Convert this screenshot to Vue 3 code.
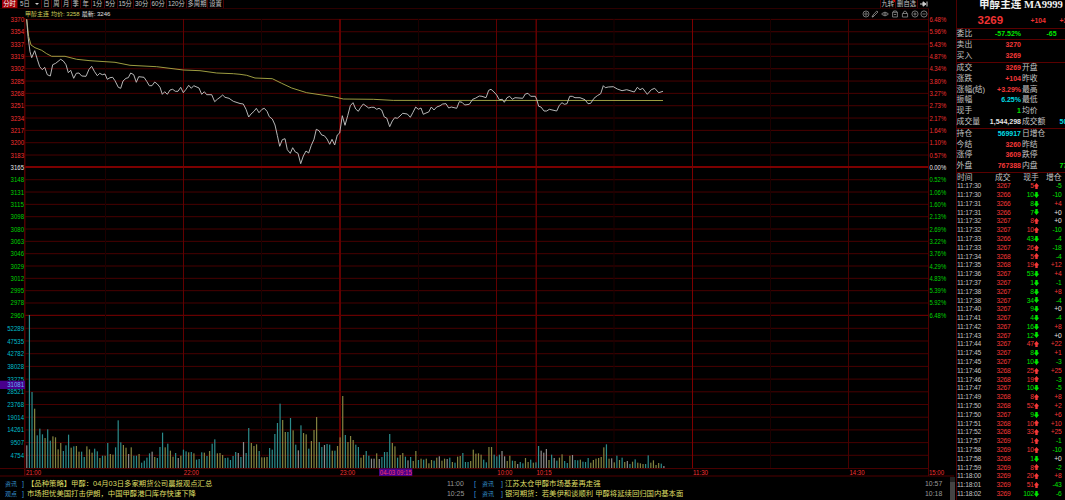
<template>
  <div class="terminal">
    <div class="main">
      <div class="toolbar">
        <span
          v-for="p in periods"
          :key="p.name"
          class="period"
          :class="{ active: p.name === current }"
          :style="{ width: p.w + 'px' }"
          @click="current = p.name"
        >{{ p.name }}<i v-if="p.drop" class="caret"></i></span>
        <span class="tool nine">九转</span>
        <span class="tool">删自选</span>
        <span class="tool">
          <svg class="collapse" viewBox="0 0 8 6"><path d="M0 3H4M3 0.8L6 3L3 5.2ZM7 0.5V5.5" /></svg>
        </span>
      </div>

      <div class="legend">
        <span class="avg">甲醇主连</span>
        <span class="avg">均价: 3258</span>
        <span>最新: 3246</span>
        <div class="icons">
          <svg viewBox="0 0 8 8"><circle cx="4" cy="4" r="3" /><circle cx="4" cy="4" r="1.2" /></svg>
          <svg viewBox="0 0 8 8"><path d="M1 7L2 5L5.8 1L7 2L3 6ZM1 7L3 6" /></svg>
          <svg viewBox="0 0 8 8"><path d="M0.6 4Q4 0.4 7.4 4Q4 7.6 0.6 4Z" /><circle cx="4" cy="4" r="1.2" /></svg>
          <svg viewBox="0 0 8 8"><path d="M1 2.3H7M2.6 2V1H5.4V2M1.6 2.5V7H6.4V2.5M2.8 4.5H5.2" /></svg>
          <svg viewBox="0 0 8 8"><path d="M1.4 3.5H6.6V7H1.4ZM2.4 3.5V2Q4 0 5.6 2V3.5" /></svg>
          <svg viewBox="0 0 8 8"><circle cx="4" cy="4" r="3.1" /><path d="M2.4 4H5.6M4 2.4V5.6" /></svg>
          <svg viewBox="0 0 8 8"><circle cx="4" cy="4" r="3.1" /><path d="M2.4 4H5.6" /></svg>
        </div>
      </div>

      <svg class="chart" viewBox="0 18 954 458">
        <!-- grid -->
        <rect v-for="(p, i) in prices" :key="'p' + p" x="25" :y="priceY(i) - 0.5" width="904" height="1" :class="i === 24 ? 'strong' : 'grid'" />
        <rect v-for="(v, i) in volumes" :key="'v' + v" x="25" :y="volumeY(i) - 0.5" width="904" height="1" class="grid" />
        <rect v-for="l in columns" :key="l.x" :x="l.x" y="19" :width="l.w" height="449" :class="l.kind" />
        <rect x="25" y="166" width="904" height="2" class="strong" />
        <rect x="24" y="18" width="1.5" height="458" class="frame" />
        <rect x="928" y="9" width="1" height="467" class="frame" />
        <rect x="0" y="468" width="929" height="1" class="grid" />
        <rect x="0" y="475.5" width="954" height="1" class="frame" />

        <!-- volume -->
        <rect v-for="(b, i) in bars" :key="'b' + i" :x="26.2 + i * 2.611" :y="468 - b.h" width="1.2" :height="b.h" :class="b.kind" />

        <!-- price -->
        <polyline class="line-avg" :points="avgLine" />
        <polyline class="line-last" :points="lastLine" />

        <!-- axes -->
        <text v-for="(p, i) in prices" :key="'tp' + p" x="10.6" :y="priceY(i) + 2.5" textLength="13.4" lengthAdjust="spacingAndGlyphs" :class="side(i)">{{ p }}</text>
        <text v-for="(p, i) in percents" :key="'tc' + i" x="929.4" :y="priceY(i) + 2.5" textLength="16.8" lengthAdjust="spacingAndGlyphs" :class="side(i)">{{ p }}%</text>
        <text
          v-for="(v, i) in volumes"
          :key="'tv' + v"
          :x="v > 9999 ? 7.2 : 10.6"
          :y="volumeY(i) + 2.5"
          :textLength="v > 9999 ? 16.8 : 13.4"
          lengthAdjust="spacingAndGlyphs"
          class="cyan"
        >{{ v }}</text>
        <text v-for="t in times" :key="t.x" :x="t.x" y="474.8" textLength="15" lengthAdjust="spacingAndGlyphs" class="up">{{ t.label }}</text>

        <!-- cursor labels -->
        <rect x="0" y="380.7" width="25" height="8.3" class="cursor" />
        <text x="7.2" y="387.3" textLength="16.8" lengthAdjust="spacingAndGlyphs" class="cursor-vol">31081</text>
        <rect x="379" y="468.5" width="33.3" height="7.5" class="cursor" />
        <text x="379.8" y="474.8" textLength="32" lengthAdjust="spacingAndGlyphs" class="cursor-time">04-03 09:15</text>
      </svg>

      <div class="news">
        <div v-for="n in news" :key="n.title" class="news-row">
          <span class="tag">{{ n.tag }}</span>
          <span class="bracket">]</span>
          <span class="title">{{ n.title }}</span>
          <span class="time">{{ n.time }}</span>
          <span class="bracket">[</span>
          <span class="tag">资讯</span>
          <span class="bracket">]</span>
          <span class="title">{{ n.title2 }}</span>
          <span class="time">{{ n.time2 }}</span>
        </div>
        <div class="scrollbar"><i></i></div>
      </div>
    </div>

    <div class="quote">
      <div class="name">甲醇主连 MA9999</div>
      <div class="last"><b>3269</b><span>+104</span><span>+3.29%</span></div>
      <div v-for="(group, g) in quote" :key="g" class="group">
        <div v-for="r in group" :key="r[0]" class="row">
          <span>{{ r[0] }}</span>
          <b :class="r[2]">{{ r[1] }}</b>
          <span>{{ r[3] }}</span>
          <b :class="r[5]">{{ r[4] }}</b>
        </div>
      </div>
      <div class="tick head"><span>时间</span><span>成交</span><span>现手</span><span>增仓</span></div>
      <div v-for="(t, i) in ticks" :key="i" class="tick">
        <span>{{ t.time }}</span>
        <span class="up">{{ t.price }}</span>
        <span class="lots" :class="t.dir">{{ t.lots }}<svg class="arrow" viewBox="0 0 5 6"><path :d="t.dir === 'up' ? upArrow : downArrow" /></svg></span>
        <span :class="changeClass(t.change)">{{ t.change }}</span>
      </div>
    </div>
  </div>
</template>

<script setup>
import { ref } from 'vue';

const current = ref('分时');

const periods = [
  { name: '分时', w: 16 },
  { name: '5日', w: 24, drop: true },
  { name: '日', w: 10 },
  { name: '周', w: 10 },
  { name: '月', w: 9.5 },
  { name: '季', w: 9.5 },
  { name: '年', w: 10.5 },
  { name: '1分', w: 13 },
  { name: '5分', w: 13 },
  { name: '15分', w: 16.5 },
  { name: '30分', w: 16.5 },
  { name: '60分', w: 16.5 },
  { name: '120分', w: 20 },
  { name: '多周期', w: 21 },
  { name: '设置', w: 16 }
];

const prices = [
  3370, 3354, 3337, 3319, 3302, 3285, 3268, 3251, 3234, 3217, 3200, 3183, 3165,
  3148, 3131, 3115, 3098, 3080, 3063, 3046, 3029, 3012, 2995, 2978, 2960
];
const percents = [
  '6.48', '5.96', '5.43', '4.87', '4.34', '3.80', '3.27', '2.73', '2.17', '1.64', '1.10', '0.57', '0.00',
  '0.52', '1.06', '1.60', '2.13', '2.69', '3.22', '3.76', '4.29', '4.83', '5.39', '5.92', '6.48'
];
const volumes = [52289, 47535, 42782, 38028, 33275, 28521, 23768, 19014, 14261, 9507, 4754];

const priceY = (i) => 19.4 + i * 12.33;
const volumeY = (i) => 328.3 + i * 12.7;
const side = (i) => (i < 12 ? 'up' : i === 12 ? 'flat' : 'down');

const columns = [
  { x: 105, w: 1, kind: 'faint' },
  { x: 183, w: 1, kind: 'mid' },
  { x: 261, w: 1, kind: 'faint' },
  { x: 339, w: 2, kind: 'mid' },
  { x: 418, w: 1, kind: 'faint' },
  { x: 496, w: 1, kind: 'mid' },
  { x: 535.5, w: 1.5, kind: 'mid' },
  { x: 613.5, w: 1, kind: 'faint' },
  { x: 692, w: 1, kind: 'strong' },
  { x: 770, w: 1, kind: 'faint' },
  { x: 848, w: 1, kind: 'grid' }
];

const times = [
  { x: 26, label: '21:00' },
  { x: 183.8, label: '22:00' },
  { x: 340, label: '23:00' },
  { x: 497.3, label: '10:00' },
  { x: 536.5, label: '10:15' },
  { x: 693, label: '11:30' },
  { x: 849.5, label: '14:30' },
  { x: 929, label: '15:00' }
];

// c = falling, y = rising, w = unchanged; three units to a pixel
const bars = `
w68 c459 c228 y178 c98 c118 c101 y90 c116 c82 y95 y92 y56 y75 c51 c68 c100 y61 c65 y66 y49 c49 c33 y65 y56 y46 c58 c50 y30 c37
y37 c75 y42 y40 c62 c143 c77 y69 y61 w42 y62 c37 c37 y42 c16 c22 c31 c44 w49 y33 c30 c63 c106 y62 c73 y52 y34 c45 w30 y37
c55 c50 y47 c48 y44 c25 c27 c47 y46 c36 y51 c73 c86 y44 y45 y39 c30 c31 c24 c36 c48 w45
c33 w78 c45 c120 y75 y66 y71 c51 y32 y32 y33 c60 c55 c102 c135 c193 y144 y108 c108 c150 y113 c70 w53 c128 y105 y101 c58 y81 y114 y153
c78 c63 w69 c72 c70 y52 c52 y66 y92 y216 c99 y78 y96 y84 c70 c63 y31 y39 c51 c37 w28 w28 y44 w27 c33 c48 c48 c102 y75 y65
c31 y39 y45 c34 w23 c33 y21 y51 c24 y28 c25 y28 y14 y24 c22 y31 w35 y22 y28 w27 c31 y18 c16 y34 y36 c45 c18 c18 y21 y55 y43 y44
y40 c25 c17 y63 y63 c40 c35 c40 w51 w35 y21 y37 c22 y21 w12 c18 c14 y30 y18 c25 y16 c17 c66 w52 w46 w57 y24 c40 w30 c22
y31 y41 c21 c15 y37 w39 c24 c23 y25 c19 c18 c30 y16 y24 y28 y30 y33 y62 c71 y28 w29 y17 c37 y24 c31 y18 w21 c12 y19 c26
y16 y14 y12 c12 c38 y16 y23 y9 y15 c13 w6
`.trim().split(/\s+/).map((b) => ({ kind: 'bar-' + b[0], h: b.slice(1) / 3 }));

const lastLine = `
26.7,19.3 28,36.7 30,51.7 31.7,57.7 34.7,50.7 37.3,59.3 39.7,66.7 42.3,69.7 44.7,67.3 47.3,74.7 50.3,76 52.7,64.7 55.7,63.3
60.7,59.3 63.3,61 66,64.7 68.3,72.7 70.7,70.3 73.7,78.3 76.3,73.3 79,73 81.7,76 86,76.3 89,69.3 91.7,66.3 94.3,71.3 97.3,75.7
99.7,73.3 102.3,74.7 105,74 107.3,79.3 110,77.7 112.7,77.3 115,80.7 118.3,87.3 120.7,88.3 123,81 126,78.3 128.3,77.7 130.7,73
133.7,74.7 136.3,82.3 138.7,76.7 144,77.3 146.7,81.3 149.3,85.7 152,85.7 154.7,82 157.3,84 160,87.3 162.3,94.3 164.7,91.7
167.3,94.3 170,90 172.7,89.3 175.3,91.3 178,91.3 180.7,87.3 183.3,92.7 186,89.3 188.7,85.3 191.3,88.3 193.7,85.7 199,88
201.7,94.3 204.3,91.7 206.7,94.7 211.7,94.7 214.7,101.7 217.3,99.3 220,97.3 222.7,95 225,97.3 229,98.3 233.3,101.3 240,103.5
243.3,104 246,109.3 248.7,117 251,114 254,111.3 256.3,108.3 259,112.7 262,109.3 264.3,108.3 267,111.3 269.3,116.7 272.3,119
275,125 277.3,135.3 279.7,146.3 282.3,139.7 285,138.7 287.3,149.7 290.3,153.3 292.7,147.7 295.3,152 298,153.3 300.7,163.7
303.3,156 306,151 308.7,153 311.3,145.3 314,139.3 316.3,129.3 319,130.7 321.7,135 324.3,135.7 327,139 329.7,144.3 332,139.3
334.7,145 337.3,135 339.7,133 342.3,115.7 345,125.3 347.7,115.7 350.3,105.7 353,102.7 355.7,109 358.3,111.3 360.7,107.3
363.3,104 366,106 368.7,108 371.3,107.3 374,107.3 376.7,109.3 379,108.3 381.7,110 384.3,117 386.7,118 389.7,126.7 392.3,121
394.7,117.7 397.3,118.3 400,116 402.7,113.3 407.3,114 410.3,117.3 413,112.3 415.7,107 418.3,109.3 421,108 423.3,114.3 426,113
428.7,112 431.3,107 434,110 436.7,107 440,105.8 442.7,104 446,103.7 448.7,108 451.3,107 456.7,108.3 459.3,101.7 462,102.3
464.7,105 469.3,104.3 472.7,99.3 475.3,98.3 479.3,96 482,96.3 486,97.7 488.7,90.3 491,89.3 494,92 496.7,95 499.3,99.7
502.3,99.3 504.3,102.3 507,97.7 509.7,96.3 512.3,99.3 515,97.7 522.7,98.3 525.3,94 528,93.3 530.7,96.3 535.3,96.3 536.7,99.3
538.7,106.3 541,107 544,111 546.7,111 549.3,109.3 556.7,111 559.3,105.3 562,102.7 564.3,104.3 567,103.7 569.7,96.3 572.3,96.3
575,97.7 580,97.7 585,99.7 588,103.7 590.7,103.3 594,98.3 597.3,95.7 600.7,93.7 603.3,85.7 605.3,87.7 608.3,87 613.3,86.7
617.3,89 622,90.7 626.7,89.7 634.3,92 637.3,87.3 640,89.7 642.7,88.3 647.3,94.3 651.3,89.7 654.7,88.3 658.7,92.7 663,91.3
`.trim();

const avgLine = `
26.7,19.3 28.7,36.7 31,45 35,47.7 41.7,50.3 46.7,53.7 51.7,56.3 65,56.3 76.7,59.3 90,60.7 115,62.3 130,65.3 156.7,66.7
183.3,70 200,70.7 216.7,73 233.3,73.7 240,74.3 246.7,75.3 255,78 272.3,78.7 281.7,83.3 291.7,88 306.7,92.7 320,94.7
333.3,96.7 343.3,99 373.3,99.3 393.3,100.4 663,100.5
`.trim();

const news = [
  { tag: '资讯', title: '【品种策略】甲醇：04月03日多家期货公司晨报观点汇总', time: '11:00', title2: '江苏太仓甲醇市场基差再走强', time2: '10:57' },
  { tag: '观点', title: '市场担忧美国打击伊朗，中国甲醇港口库存快速下降', time: '10:25', title2: '银河期货：若美伊和谈顺利 甲醇将延续回归国内基本面', time2: '10:18' }
];

const quote = [
  [['委比', '-57.52%', 'down', '', '-65', 'down near']],
  [['卖出', '3270', 'up'], ['买入', '3269', 'up']],
  [
    ['成交', '3269', 'up', '开盘'],
    ['涨跌', '+104', 'up', '昨收'],
    ['涨幅(结)', '+3.29%', 'up', '最高'],
    ['振幅', '6.25%', 'cyan', '最低'],
    ['现手', '1', 'down', '均价'],
    ['成交量', '1,544,298', 'flat', '成交额', '50', 'cyan']
  ],
  [
    ['持仓', '569917', 'cyan', '日增仓'],
    ['今结', '3260', 'up', '昨结'],
    ['涨停', '3609', 'up', '跌停'],
    ['外盘', '767388', 'up', '内盘', '77', 'down']
  ]
];

const upArrow = 'M2.5 0L5 3L3.7 3.8V6H1.3V3.8L0 3Z';
const downArrow = 'M2.5 6L5 3L3.7 2.2V0H1.3V2.2L0 3Z';

const ticks = `
30 3267 5u -5|30 3266 10d -10|31 3266 8d +4|31 3266 7d +0|32 3267 8u +0|32 3267 10u -10|33 3266 43d -4|33 3267 26u -18
34 3268 5u -4|35 3268 19u +12|36 3267 53d +4|37 3267 1d -1|38 3267 8d +8|38 3267 34d -4|40 3267 9d +0|41 3267 4d -4
42 3267 16d +8|43 3267 12d +0|44 3267 47u +22|45 3267 8d +1|45 3267 10d -3|46 3268 25u +25|46 3268 19u -3|47 3267 10d -5
49 3268 8u +8|50 3268 52u +2|50 3267 9d +6|51 3268 10u +10|52 3268 33u +25|57 3269 1u -1|58 3269 10u -10|58 3268 1d +0
59 3269 8u -2|00 3269 20u +8|01 3269 51u -43|02 3269 102d -6
`.trim().split(/[|\n]/).map((line) => {
  const [sec, price, lots, change] = line.split(' ');
  return {
    time: (+sec < 10 ? '11:18:' : '11:17:') + sec,
    price,
    lots: parseInt(lots),
    dir: lots.endsWith('u') ? 'up' : 'down',
    change
  };
});

function changeClass(change) {
  if (change === '+0') return 'flat';
  return change[0] === '+' ? 'up' : 'down';
}
</script>

<style>
body {
  background: #000;
  overflow: hidden;
}
</style>

<style scoped>
.terminal {
  display: flex;
  width: 1065px;
  height: 500px;
  overflow: hidden;
  background: #000;
  color: #c4c4c4;
  font-family: "Liberation Sans", "Noto Sans CJK SC", sans-serif;
  font-size: 6.3px;
  white-space: nowrap;
}

.main {
  display: flex;
  flex-direction: column;
  flex: 0 0 954px;
}

.up {
  color: #f43838;
  fill: #f03030;
}

.down {
  color: #00e600;
  fill: #00d000;
}

.flat {
  color: #e4e4e4;
  fill: #e8e8e8;
}

.cyan {
  color: #00dce4;
  fill: #00bcc8;
}

/* toolbar */
.toolbar {
  display: flex;
  height: 9px;
  padding-left: 2px;
  box-sizing: border-box;
  line-height: 8px;
  border-bottom: 1px solid #2c0000;
  width: 929px;
}

.period {
  flex: none;
  box-sizing: border-box;
  border-right: 1px solid #4a0000;
  text-align: center;
}

.period.active {
  background: #a00008;
  color: #fff;
}

.caret {
  display: inline-block;
  margin: 0 0 1.5px 5px;
  border: 2px solid transparent;
  border-top: 2.5px solid #ccc;
  border-bottom: 0;
}

.tool {
  padding: 0 1px;
  border-left: 1px solid #4a0000;
}

.tool.nine {
  margin-left: auto;
  background: linear-gradient(225deg, #e00000 2px, transparent 2px);
}

.collapse {
  width: 8px;
  height: 6px;
  margin: 1px 0 0 1px;
  fill: #ccc;
  stroke: #ccc;
  display: block;
}

.legend {
  display: flex;
  align-items: center;
  gap: 2px;
  height: 9px;
  padding-left: 25px;
  font-size: 6px;
  color: #e0e0e0;
}

.legend .avg {
  color: #d2d25a;
}

.icons {
  display: flex;
  gap: 1.8px;
  margin: 0 26.6px 0 auto;
}

.icons svg {
  width: 8px;
  height: 8px;
  fill: none;
  stroke: #909090;
  stroke-width: 0.8;
}

/* chart */
.chart {
  display: block;
  flex: none;
  width: 954px;
  height: 458px;
  overflow: visible;
  font-size: 7px;
}

.grid {
  fill: #480000;
}

.mid {
  fill: #620000;
}

.strong {
  fill: #7c0000;
}

.frame {
  fill: #500000;
}

.faint {
  fill: #1c0000;
}

.bar-c {
  fill: #2c8c8c;
}

.bar-y {
  fill: #848440;
}

.bar-w {
  fill: #8c8c8c;
}

.line-last,
.line-avg {
  fill: none;
  stroke-width: 0.95;
  stroke: #c0c0c0;
}

.line-avg {
  stroke: #a4a444;
}

.cursor {
  fill: #48008c;
}

.cursor-vol {
  fill: #60b4f4;
}

.cursor-time {
  fill: #f03868;
}

/* news */
.news {
  position: relative;
  height: 24px;
  padding-top: 3px;
  box-sizing: border-box;
}

.news-row {
  display: grid;
  grid-template-columns: 17px 5px 420px 27px 8px 19px 4px 420px 30px;
  padding-left: 5px;
  height: 10.4px;
  line-height: 10.4px;
}

.tag,
.bracket {
  color: #3490cc;
  font-size: 6px;
}

.bracket {
  font-size: 7.2px;
}

.title {
  color: #dede64;
  font-size: 7.35px;
}

.time {
  color: #989898;
  font-size: 6.9px;
}

.scrollbar {
  position: absolute;
  top: 1px;
  right: 0;
  width: 5px;
  height: 23px;
  background: #444;
}

.scrollbar i {
  display: block;
  height: 5px;
  background: #222;
}

/* quote panel */
.quote {
  flex: 0 0 160px;
  border-left: 1px solid #500000;
  box-sizing: border-box;
  margin-left: 1px;
}

.name {
  height: 12px;
  padding-left: 22px;
  color: #f0f0f0;
  font: bold 10.6px/10px "Liberation Serif", "Noto Sans CJK SC", serif;
}

.last {
  display: grid;
  grid-template-columns: 53px 29px 40px;
  height: 16px;
  padding-left: 20.5px;
  align-items: center;
  color: #f03232;
  font-size: 6.8px;
  font-weight: bold;
}

.last b {
  font-size: 11.5px;
}

.group {
  border-top: 1px solid #5a0000;
}

.row {
  display: grid;
  grid-template-columns: 34px 30px 38.5px 30px;
  height: 10.8px;
  line-height: 10.8px;
  font-size: 7.8px;
}

.group:nth-child(3) .row {
  height: 10.4px;
}

.row span:first-child {
  margin-left: -0.4px;
}

.row b {
  font-size: 7px;
}

.row b + span {
  padding-left: 1px;
}

.row span:first-child + b {
  text-align: right;
  margin-left: -10px;
}

.row .near {
  margin-left: -13px;
}

.tick {
  display: grid;
  grid-template-columns: 25px 28.5px 28.3px 22.7px;
  height: 8.8px;
  line-height: 8.8px;
  font-size: 6.7px;
  letter-spacing: -0.2px;
}

.tick span + span {
  text-align: right;
}

.tick.head {
  height: 9.2px;
  line-height: 9.2px;
  border-top: 1px solid #5a0000;
  font-size: 7.8px;
  letter-spacing: 0;
}

.arrow {
  width: 5px;
  height: 6px;
  fill: currentColor;
  vertical-align: -0.8px;
}
</style>
